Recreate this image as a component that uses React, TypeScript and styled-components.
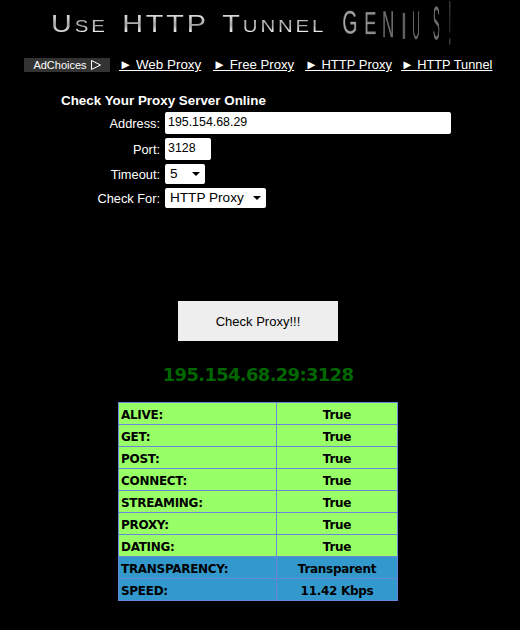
import React from "react";
import styled, { createGlobalStyle } from "styled-components";

const Global = createGlobalStyle`
  html, body { margin: 0; padding: 0; background: #000; }
  body { width: 520px; height: 630px; overflow: hidden; font-family: "Liberation Sans", Arial, sans-serif; color: #fff; }
`;

const Page = styled.div`
  width: 520px;
  height: 630px;
  background: #000;
  display: flex;
  flex-direction: column;
`;

const Logo = styled.div`
  height: 50px;
  padding-left: 51px;
  display: flex;
  align-items: center;
  box-sizing: border-box;
`;

const LogoWords = styled.span`
  width: 287.6px;
  flex: none;
  display: block;
  font-family: "Liberation Sans", sans-serif;
  font-size: 24px;
  line-height: 28px;
  letter-spacing: 2.4px;
  word-spacing: 3px;
  white-space: nowrap;
  transform-origin: left center;
  transform: scaleX(1.2);
  margin-top: 1px;
  background: linear-gradient(180deg, #d8d8d8 20%, #a4a4a4 48%, #f2f2f2 72%, #b4b4b4 85%);
  -webkit-background-clip: text;
  background-clip: text;
  color: transparent;
`;

const SmallCap = styled.span`
  font-size: 17px;
`;

const GeniusLetter = styled.span<{ $sx: number; $sy: number; $w: number; $ml: number; $dy: number; $c: string }>`
  display: block;
  flex: none;
  width: ${(p) => p.$w}px;
  margin-left: ${(p) => p.$ml}px;
  font-family: "Liberation Sans", sans-serif;
  font-size: 28px;
  line-height: 20px;
  color: ${(p) => p.$c};
  will-change: transform;
  transform: translateY(${(p) => p.$dy}px) scale(${(p) => p.$sx}, ${(p) => p.$sy});
`;

const Nav = styled.nav`
  display: flex;
  align-items: center;
  height: 16px;
  margin-top: 7px;
  padding-left: 24px;
`;

const AdChoices = styled.div`
  width: 86px;
  height: 14px;
  background: #333;
  color: #fff;
  font-size: 11px;
  line-height: 14px;
  display: flex;
  align-items: center;
  justify-content: center;
  gap: 3px;
  padding-left: 1px;
  box-sizing: border-box;
  flex: none;
`;

const NavLink = styled.a<{ $w: number; $ml: number; $fs: number }>`
  display: block;
  flex: none;
  width: ${(p) => p.$w}px;
  margin-left: ${(p) => p.$ml}px;
  font-size: ${(p) => p.$fs}px;
  line-height: 16px;
  color: #fff;
  text-decoration: underline;
  white-space: nowrap;
`;

const Form = styled.form`
  margin: 20px 0 0;
  display: flex;
  flex-direction: column;
`;

const FormTitle = styled.div`
  margin-left: 61px;
  font-family: "Liberation Sans", sans-serif;
  font-size: 13.4px;
  font-weight: 700;
  line-height: 15px;
`;

const FormRows = styled.div`
  display: grid;
  grid-template-columns: 160px auto;
  justify-content: start;
  justify-items: start;
  align-items: center;
  column-gap: 5px;
  row-gap: 4px;
  margin-top: 4px;
`;

const Label = styled.label`
  justify-self: end;
  font-size: 12.8px;
  line-height: 16px;
  padding-top: 2px;
  color: #fff;
  white-space: nowrap;
`;

const Field = styled.div<{ $w: number }>`
  width: ${(p) => p.$w}px;
  height: 22px;
  box-sizing: border-box;
  background: #fff;
  border-radius: 2px;
  color: #000;
  font-size: 12.4px;
  line-height: 21px;
  padding-left: 3px;
`;

const Select = styled.div<{ $w: number }>`
  width: ${(p) => p.$w}px;
  height: 20px;
  box-sizing: border-box;
  background: #fff;
  border-radius: 2px;
  color: #000;
  font-size: 13.6px;
  line-height: 20px;
  padding: 0 5px;
  display: flex;
  align-items: center;
  justify-content: space-between;
`;

const Caret = styled.span`
  width: 0;
  height: 0;
  border-left: 4px solid transparent;
  border-right: 4px solid transparent;
  border-top: 4px solid #000;
  flex: none;
`;

const Submit = styled.button`
  display: block;
  align-self: flex-start;
  margin: 93px 0 0 178px;
  width: 160px;
  height: 40px;
  border: none;
  padding: 0;
  background: #eeeeee;
  color: #000;
  font-family: "Liberation Sans", sans-serif;
  font-size: 13px;
`;

const Result = styled.h2`
  margin: 22px 0 0;
  width: 516px;
  text-align: center;
  font-family: "DejaVu Sans", Verdana, sans-serif;
  font-size: 18px;
  letter-spacing: -0.7px;
  line-height: 24px;
  font-weight: 700;
  color: #006600;
`;

const Table = styled.table`
  margin: 15px 0 0 118px;
  width: 280px;
  table-layout: fixed;
  border-collapse: separate;
  border-spacing: 0;
  border-top: 1px solid #6a86dc;
  border-left: 1px solid #6a86dc;
  font-family: "DejaVu Sans", Verdana, sans-serif;
  font-size: 12px;
  letter-spacing: -0.3px;
  font-weight: 700;
  color: #000;
`;

const Row = styled.tr<{ $bg: string }>`
  background: ${(p) => p.$bg};
`;

const Key = styled.td`
  height: 18px;
  width: 155px;
  box-sizing: content-box;
  border-right: 1px solid #6a86dc;
  border-bottom: 1px solid #6a86dc;
  padding: 3px 0 0 2px;
  line-height: 18px;
`;

const Val = styled.td`
  height: 18px;
  box-sizing: content-box;
  border-right: 1px solid #6a86dc;
  border-bottom: 1px solid #6a86dc;
  padding: 3px 0 0;
  text-align: center;
  line-height: 18px;
`;

const rows: [string, string, string][] = [
  ["ALIVE:", "True", "#99ff66"],
  ["GET:", "True", "#99ff66"],
  ["POST:", "True", "#99ff66"],
  ["CONNECT:", "True", "#99ff66"],
  ["STREAMING:", "True", "#99ff66"],
  ["PROXY:", "True", "#99ff66"],
  ["DATING:", "True", "#99ff66"],
  ["TRANSPARENCY:", "Transparent", "#3399cc"],
  ["SPEED:", "11.42 Kbps", "#3399cc"],
];

const genius: { c: string; sx: number; sy: number; w: number; ml: number; dy: number; col: string }[] = [
  { c: "G", sx: 0.7, sy: 1.2, w: 21.8, ml: 0, dy: -2, col: "#a8a8a8" },
  { c: "E", sx: 0.66, sy: 1.15, w: 18.7, ml: 0.25, dy: -1.5, col: "#909090" },
  { c: "N", sx: 0.6, sy: 1.3, w: 20.2, ml: -1.45, dy: 0, col: "#707070" },
  { c: "I", sx: 0.8, sy: 1.35, w: 7.8, ml: 1.5, dy: 1.5, col: "#6a6a6a" },
  { c: "U", sx: 0.38, sy: 1.45, w: 20.2, ml: -1.5, dy: 1.5, col: "#666666" },
  { c: "S", sx: 0.38, sy: 1.7, w: 18.7, ml: 0.55, dy: -1, col: "#6e6e6e" },
  { c: "!", sx: 0.4, sy: 2.3, w: 7.8, ml: 0.75, dy: -1, col: "#555555" },
];

export default function App() {
  return (
    <Page>
      <Global />
      <Logo>
        <LogoWords>
          U<SmallCap>SE</SmallCap> HTTP T<SmallCap>UNNEL</SmallCap>
        </LogoWords>
        {genius.map((g) => (
          <GeniusLetter key={g.c} $sx={g.sx} $sy={g.sy} $w={g.w} $ml={g.ml} $dy={g.dy} $c={g.col}>
            {g.c}
          </GeniusLetter>
        ))}
      </Logo>
      <Nav>
        <AdChoices>
          AdChoices
          <svg width="12" height="12" viewBox="0 0 12 12" fill="none" stroke="#fff" strokeWidth="1">
            <path d="M1.5 1.5 L1.5 10.5 L10.5 6 Z" />
          </svg>
        </AdChoices>
        <NavLink href="#" $w={81} $ml={9} $fs={13.4}>► Web Proxy</NavLink>
        <NavLink href="#" $w={81} $ml={13} $fs={13.2}>► Free Proxy</NavLink>
        <NavLink href="#" $w={86} $ml={11} $fs={13}>► HTTP Proxy</NavLink>
        <NavLink href="#" $w={90} $ml={10} $fs={12.8}>► HTTP Tunnel</NavLink>
      </Nav>
      <Form>
        <FormTitle>Check Your Proxy Server Online</FormTitle>
        <FormRows>
          <Label>Address:</Label>
          <Field $w={286}>195.154.68.29</Field>
          <Label>Port:</Label>
          <Field $w={46}>3128</Field>
          <Label>Timeout:</Label>
          <Select $w={40}>5<Caret /></Select>
          <Label>Check For:</Label>
          <Select $w={101}>HTTP Proxy<Caret /></Select>
        </FormRows>
        <Submit type="button">Check Proxy!!!</Submit>
      </Form>
      <Result>195.154.68.29:3128</Result>
      <Table>
        <tbody>
          {rows.map(([k, v, bg]) => (
            <Row key={k} $bg={bg}>
              <Key>{k}</Key>
              <Val>{v}</Val>
            </Row>
          ))}
        </tbody>
      </Table>
    </Page>
  );
}
